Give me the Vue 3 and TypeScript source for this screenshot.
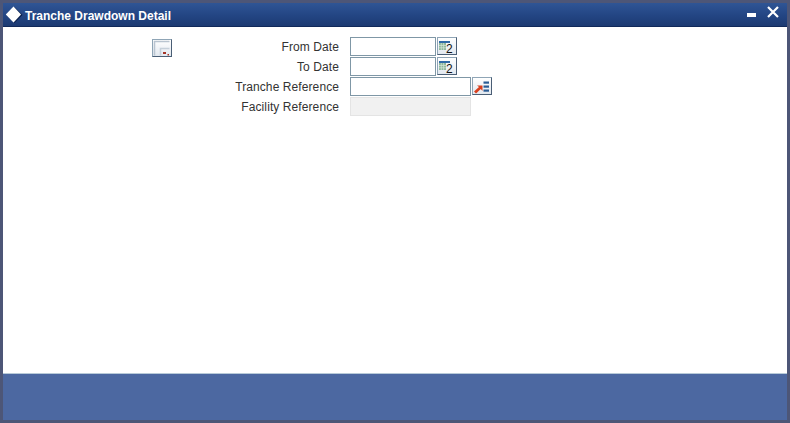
<template>
  <div class="window">
    <header class="title-bar">
      <svg class="logo" width="18" height="18" viewBox="0 0 18 18">
        <path d="M9.5 1 L17.5 9 L9.5 17 L1.5 9 Z" fill="#0a1f4c" />
        <path d="M8.5 0.5 L16 8.5 L8.5 16.5 L0.8 8.5 Z" fill="#fff" />
      </svg>
      <span class="title">Tranche Drawdown Detail</span>
      <div class="window-controls">
        <span class="minimize"></span>
        <svg width="12" height="12" viewBox="0 0 12 12">
          <path d="M1 1 L11 11 M11 1 L1 11" stroke="#fff" stroke-width="2.2" fill="none" />
        </svg>
      </div>
    </header>

    <main class="body">
      <button class="icon-btn export-btn" type="button">
        <svg width="18" height="17" viewBox="0 0 18 17">
          <path d="M1.5 15.5 V1.5 H16.5" fill="none" stroke="#b9c4d0" stroke-width="1.5" />
          <path d="M7.5 15.5 V8.5 H16.5" fill="none" stroke="#c6d0da" stroke-width="1.5" />
          <rect x="10" y="12" width="3" height="2" fill="#a5352a" />
          <rect x="14.5" y="14" width="1.5" height="1.5" fill="#a5352a" />
        </svg>
      </button>

      <div class="form">
        <template v-for="row in rows" :key="row.label">
          <label class="field-label">{{ row.label }}</label>
          <div class="field">
            <input class="text-input" :class="[row.size, { disabled: row.disabled }]" :disabled="row.disabled" type="text" />
            <button v-if="row.button === 'calendar'" class="icon-btn" type="button">
              <svg width="18" height="16" viewBox="0 0 18 16">
                <rect x="1" y="3" width="11" height="2" fill="#2f6aa8" />
                <rect x="1" y="5" width="7" height="7" fill="#8db79c" />
                <path d="M1 7.5 H8 M1 9.8 H8 M3.3 5 V12 M5.6 5 V12" stroke="#d5e6da" stroke-width="0.7" />
                <text x="8" y="14.5" class="calendar-digit">2</text>
              </svg>
            </button>
            <button v-else-if="row.button === 'lookup'" class="icon-btn" type="button">
              <svg width="18" height="16" viewBox="0 0 18 16">
                <path d="M1 13.5 L6 9 L4 7.5 H9.5 V13 L7.8 11 L3 15.5 Z" fill="#d8401f" />
                <rect x="10.5" y="3.5" width="5.5" height="2.2" fill="#2b5c94" />
                <rect x="10.5" y="7.5" width="5.5" height="2.2" fill="#2b5c94" />
                <rect x="10.5" y="11.5" width="5.5" height="2.2" fill="#2b5c94" />
              </svg>
            </button>
          </div>
        </template>
      </div>
    </main>

    <footer class="footer"></footer>
  </div>
</template>

<script setup lang="ts">
interface Row {
  label: string
  size: 'short' | 'long'
  button?: 'calendar' | 'lookup'
  disabled?: boolean
}

const rows: Row[] = [
  { label: 'From Date', size: 'short', button: 'calendar' },
  { label: 'To Date', size: 'short', button: 'calendar' },
  { label: 'Tranche Reference', size: 'long', button: 'lookup' },
  { label: 'Facility Reference', size: 'long', disabled: true },
]
</script>

<style>
html,
body {
  margin: 0;
  background: #4d5677;
}
</style>

<style scoped>
.window {
  width: 790px;
  height: 423px;
  box-sizing: border-box;
  padding: 3px;
  display: flex;
  flex-direction: column;
  background: #4d5677;
  font-family: "Liberation Sans", Arial, sans-serif;
  font-size: 12px;
  color: #333;
}

.title-bar {
  height: 24px;
  flex: none;
  display: flex;
  align-items: center;
  padding: 0 3px 0 2px;
  gap: 2px;
  background: linear-gradient(#2f5595, #234583 55%, #1c3a72);
  border-bottom: 1px solid #11295a;
  box-sizing: border-box;
}

.logo {
  flex: none;
}

.title {
  color: #fff;
  font-weight: bold;
  font-size: 12px;
  margin-top: 2px;
}

.window-controls {
  margin-left: auto;
  align-self: flex-start;
  display: flex;
  align-items: flex-start;
  gap: 11px;
  padding: 3px 5px 0 0;
}

.minimize {
  width: 9px;
  height: 4px;
  background: #fff;
  margin-top: 7px;
}

.body {
  flex: 1;
  background: #fff;
  display: flex;
  align-items: flex-start;
  padding: 10px 0 0 149px;
}

.export-btn {
  margin-top: 2px;
}

.icon-btn {
  width: 20px;
  height: 18px;
  padding: 0;
  box-sizing: border-box;
  display: flex;
  align-items: center;
  justify-content: center;
  background: linear-gradient(#fff, #e2e8ef);
  border: 1px solid #8fa5b6;
  border-right-color: #4a5e75;
  border-bottom-color: #4a5e75;
}

.form {
  display: grid;
  grid-template-columns: 167px auto;
  column-gap: 11px;
  grid-auto-rows: 20px;
}

.field-label {
  text-align: right;
  line-height: 19px;
  padding-top: 1px;
  color: #333;
  letter-spacing: 0.09px;
}

.field {
  display: flex;
  align-items: flex-start;
  gap: 1px;
}

.text-input {
  height: 19px;
  box-sizing: border-box;
  margin: 0;
  padding: 0 2px;
  background: #fff;
  border: 1px solid #7f97a6;
  outline: none;
}

.text-input.short {
  width: 86px;
}

.text-input.long {
  width: 121px;
}

.text-input.disabled {
  background: #f1f1f1;
  border-color: #e4e4e4;
}

.calendar-digit {
  font-family: "Liberation Sans", Arial, sans-serif;
  font-size: 12px;
  fill: #111;
}

.footer {
  height: 46px;
  flex: none;
  background: #4c68a1;
  border-top: 1px solid #b8cad8;
}
</style>
